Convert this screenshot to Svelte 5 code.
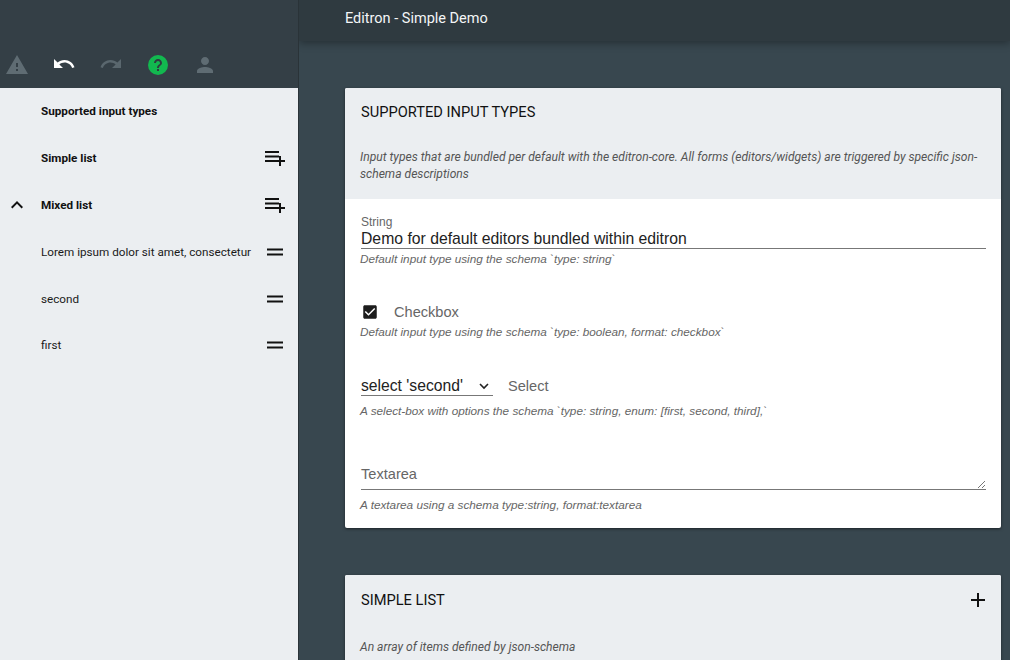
<script>
  const navItems = [
    { label: 'Supported input types', bold: true },
    { label: 'Simple list', bold: true, action: 'add' },
    { label: 'Mixed list', bold: true, action: 'add', open: true },
    { label: 'Lorem ipsum dolor sit amet, consectetur', action: 'drag' },
    { label: 'second', action: 'drag' },
    { label: 'first', action: 'drag' }
  ];
</script>

<div class="app">
  <aside class="sidebar">
    <div class="toolbar">
      <span class="tool"><svg viewBox="0 0 24 24" width="24" height="24"><path fill="#5f6c73" d="M1 21h22L12 2 1 21zm12-3h-2v-2h2v2zm0-4h-2v-4h2v4z" /></svg></span>
      <span class="tool raised"><svg viewBox="0 0 24 24" width="24" height="24"><path fill="#fff" d="M12.5 8c-2.65 0-5.05.99-6.9 2.6L2 7v9h9l-3.62-3.62c1.39-1.16 3.16-1.88 5.12-1.88 3.54 0 6.55 2.31 7.6 5.5l2.37-.78C21.08 11.03 17.15 8 12.5 8z" /></svg></span>
      <span class="tool raised"><svg viewBox="0 0 24 24" width="24" height="24"><path fill="#5a676e" d="M18.4 10.6C16.55 8.99 14.15 8 11.5 8c-4.65 0-8.58 3.03-9.96 7.22L3.9 16c1.05-3.19 4.05-5.5 7.6-5.5 1.95 0 3.73.72 5.12 1.88L13 16h9V7l-3.6 3.6z" /></svg></span>
      <span class="tool"><svg viewBox="0 0 24 24" width="24" height="24"><circle cx="12" cy="12" r="10" fill="#12b84f" /><path fill="#2f3a40" d="M11 18h2v-2h-2v2zm1-12c-2.21 0-4 1.79-4 4h2c0-1.1.9-2 2-2s2 .9 2 2c0 2-3 1.75-3 5h2c0-2.25 3-2.5 3-5 0-2.21-1.79-4-4-4z" /></svg></span>
      <span class="tool"><svg viewBox="0 0 24 24" width="24" height="24"><path fill="#5f6c73" d="M12 12c2.21 0 4-1.79 4-4s-1.79-4-4-4-4 1.79-4 4 1.79 4 4 4zm0 2c-2.67 0-8 1.34-8 4v2h16v-2c0-2.66-5.33-4-8-4z" /></svg></span>
    </div>
    <nav class="nav">
      {#each navItems as item}
        <div class="nav-row">
          <span class="caret">
            {#if item.open}
              <svg viewBox="0 0 24 24" width="24" height="24"><path fill="#111" d="M12 8l-6 6 1.41 1.41L12 10.83l4.59 4.58L18 14z" /></svg>
            {/if}
          </span>
          <span class="nav-label" class:bold={item.bold}>{item.label}</span>
          {#if item.action === 'add'}
            <svg class="nav-action" viewBox="0 0 24 24" width="24" height="24"><path fill="#111" d="M2 5h14v2H2zm0 4.500h14v2H2zm0 4.500h10v2H2zm14 0v-4h2v4h4v2h-4v4h-2v-4h-4v-2z" /></svg>
          {:else if item.action === 'drag'}
            <svg class="nav-action" viewBox="0 0 24 24" width="24" height="24"><path fill="#111" d="M4 8.500h16v2H4zm0 5h16v2H4z" /></svg>
          {/if}
        </div>
      {/each}
    </nav>
  </aside>

  <div class="main">
    <header class="topbar">Editron - Simple Demo</header>
    <div class="content">
      <section class="card">
        <div class="card-head">
          <h2>SUPPORTED INPUT TYPES</h2>
          <p>Input types that are bundled per default with the editron-core. All forms (editors/widgets) are triggered by specific json-schema descriptions</p>
        </div>
        <div class="card-body">
          <div class="field string">
            <span class="small-label">String</span>
            <div class="value">Demo for default editors bundled within editron</div>
            <p class="hint">Default input type using the schema `type: string`</p>
          </div>
          <div class="field check">
            <div class="check-row">
              <svg viewBox="0 0 24 24" width="18" height="18"><path fill="#1c1c1c" d="M19 3H5c-1.1 0-2 .9-2 2v14c0 1.100.9 2 2 2h14c1.100 0 2-.9 2-2V5c0-1.100-.9-2-2-2zm-9 14l-5-5 1.410-1.410L10 14.170l7.590-7.590L19 8l-9 9z" /></svg>
              <span class="inline-label">Checkbox</span>
            </div>
            <p class="hint check-hint">Default input type using the schema `type: boolean, format: checkbox`</p>
          </div>
          <div class="field select">
            <div class="select-row">
              <div class="select-box">
                <span>select 'second'</span>
                <svg viewBox="0 0 12 12" width="12" height="12"><path d="M2 4l4 4 4-4" fill="none" stroke="#222" stroke-width="1.600" /></svg>
              </div>
              <span class="inline-label">Select</span>
            </div>
            <p class="hint">A select-box with options the schema `type: string, enum: [first, second, third],`</p>
          </div>
          <div class="field area">
            <div class="area-box">
              <span class="inline-label">Textarea</span>
              <svg class="grip" viewBox="0 0 9 9" width="9" height="9"><path d="M1 8l7-7M5 8l3-3" stroke="#777" stroke-width="1" fill="none" /></svg>
            </div>
            <p class="hint">A textarea using a schema type:string, format:textarea</p>
          </div>
        </div>
      </section>

      <section class="card">
        <div class="card-head second">
          <div class="head-row">
            <h2>SIMPLE LIST</h2>
            <svg viewBox="0 0 24 24" width="24" height="24"><path fill="#111" d="M19 13h-6v6h-2v-6H5v-2h6V5h2v6h6v2z" /></svg>
          </div>
          <p>An array of items defined by json-schema</p>
        </div>
      </section>
    </div>
  </div>
</div>

<style>
  :global(body) {
    margin: 0;
    overflow: hidden;
  }

  .app {
    display: flex;
    width: 1010px;
    height: 660px;
    overflow: hidden;
    background: #38474f;
    font-family: Roboto, "Liberation Sans", sans-serif;
  }

  .sidebar {
    flex: 0 0 298px;
    display: flex;
    flex-direction: column;
    background: #ebeef1;
    border-right: 1px solid #2a3338;
    z-index: 2;
  }

  .toolbar {
    height: 88px;
    box-sizing: border-box;
    padding: 0 0 11px;
    display: flex;
    align-items: flex-end;
    background: #343f46;
  }

  .tool {
    flex: 0 0 47px;
    display: flex;
    justify-content: center;
    height: 24px;
  }
  .tool:first-child { margin-left: -7px; }
  .tool.raised { margin-bottom: 1px; }

  .nav-row {
    display: flex;
    align-items: center;
    height: 46.800px;
    padding: 0 11px 0 5px;
    color: #1a1a1a;
  }

  .caret {
    flex: 0 0 24px;
    height: 24px;
    margin-right: 12px;
  }

  .nav-label {
    flex: 1;
    white-space: nowrap;
    font-size: 11.700px;
  }
  .bold { font-weight: 700; color: #111; }

  .nav-action { flex: 0 0 auto; }

  .main {
    flex: 1;
    min-width: 0;
    display: flex;
    flex-direction: column;
  }

  .topbar {
    height: 41px;
    flex: 0 0 41px;
    box-sizing: border-box;
    padding: 0 0 5px 46px;
    display: flex;
    align-items: center;
    background: #2f3a40;
    color: #f4f6f7;
    font-size: 14.500px;
    box-shadow: 0 2px 8px rgba(0, 0, 0, 0.35);
  }

  .content {
    padding: 47px 9px 0 46px;
    display: flex;
    flex-direction: column;
    gap: 47px;
  }

  .card {
    border-radius: 2px;
    overflow: hidden;
    background: #fff;
    box-shadow: 0 1px 3px rgba(0, 0, 0, 0.5);
    flex: 0 0 auto;
  }

  .card-head {
    height: 111px;
    box-sizing: border-box;
    padding: 15px 16px 0;
    background: #ebeef1;
  }
  .card-head p { margin-left: -1px; }
  .card-head.second {
    height: 110px;
    padding-top: 13px;
  }

  .head-row {
    display: flex;
    justify-content: space-between;
    align-items: center;
    margin-right: -5px;
  }

  h2 {
    margin: 0;
    font-size: 14.650px;
    font-weight: 400;
    line-height: 18px;
    color: #111;
  }

  .card-head p {
    margin-top: 28px;
    margin-bottom: 0;
    margin-right: 0;
    font-size: 12.100px;
    line-height: 17px;
    font-style: italic;
    color: #555;
  }
  .card-head.second .head-row + p { margin-top: 27px; }

  .card-body {
    height: 329px;
    box-sizing: border-box;
    padding: 16px 15px 0 16px;
  }

  .field {
    font-family: "Liberation Sans", Arial, sans-serif;
  }

  .small-label {
    display: block;
    font-size: 12px;
    line-height: 14px;
    color: #666;
  }

  .value {
    font-size: 15.750px;
    line-height: 19px;
    color: #222;
    border-bottom: 1px solid #777;
  }

  .hint {
    margin: 3px 0 0 -1px;
    font-size: 11.750px;
    line-height: 14px;
    font-style: italic;
    color: #666;
  }
  .hint.check-hint { margin-top: 4px; }

  .field.check { margin-top: 37px; }

  .check-row {
    display: flex;
    align-items: center;
    height: 18px;
  }

  .inline-label {
    font-size: 14.600px;
    color: #666;
  }
  .check-row .inline-label { margin-left: 15px; }

  .field.select { margin-top: 38px; }

  .select-row {
    display: flex;
    align-items: center;
    gap: 15px;
    height: 18px;
  }

  .select-box {
    width: 132px;
    display: flex;
    align-items: center;
    justify-content: space-between;
    box-sizing: border-box;
    padding-right: 3px;
    font-size: 15.700px;
    line-height: 18px;
    color: #222;
    border-bottom: 1px solid #777;
  }

  .field.select .hint { margin-top: 9px; }

  .field.area { margin-top: 47px; }

  .area-box {
    position: relative;
    height: 25px;
    box-sizing: border-box;
    border-bottom: 1px solid #777;
  }
  .area-box .grip {
    position: absolute;
    right: 0;
    bottom: 0;
  }

  .field.area .hint { margin-top: 8px; }
</style>
